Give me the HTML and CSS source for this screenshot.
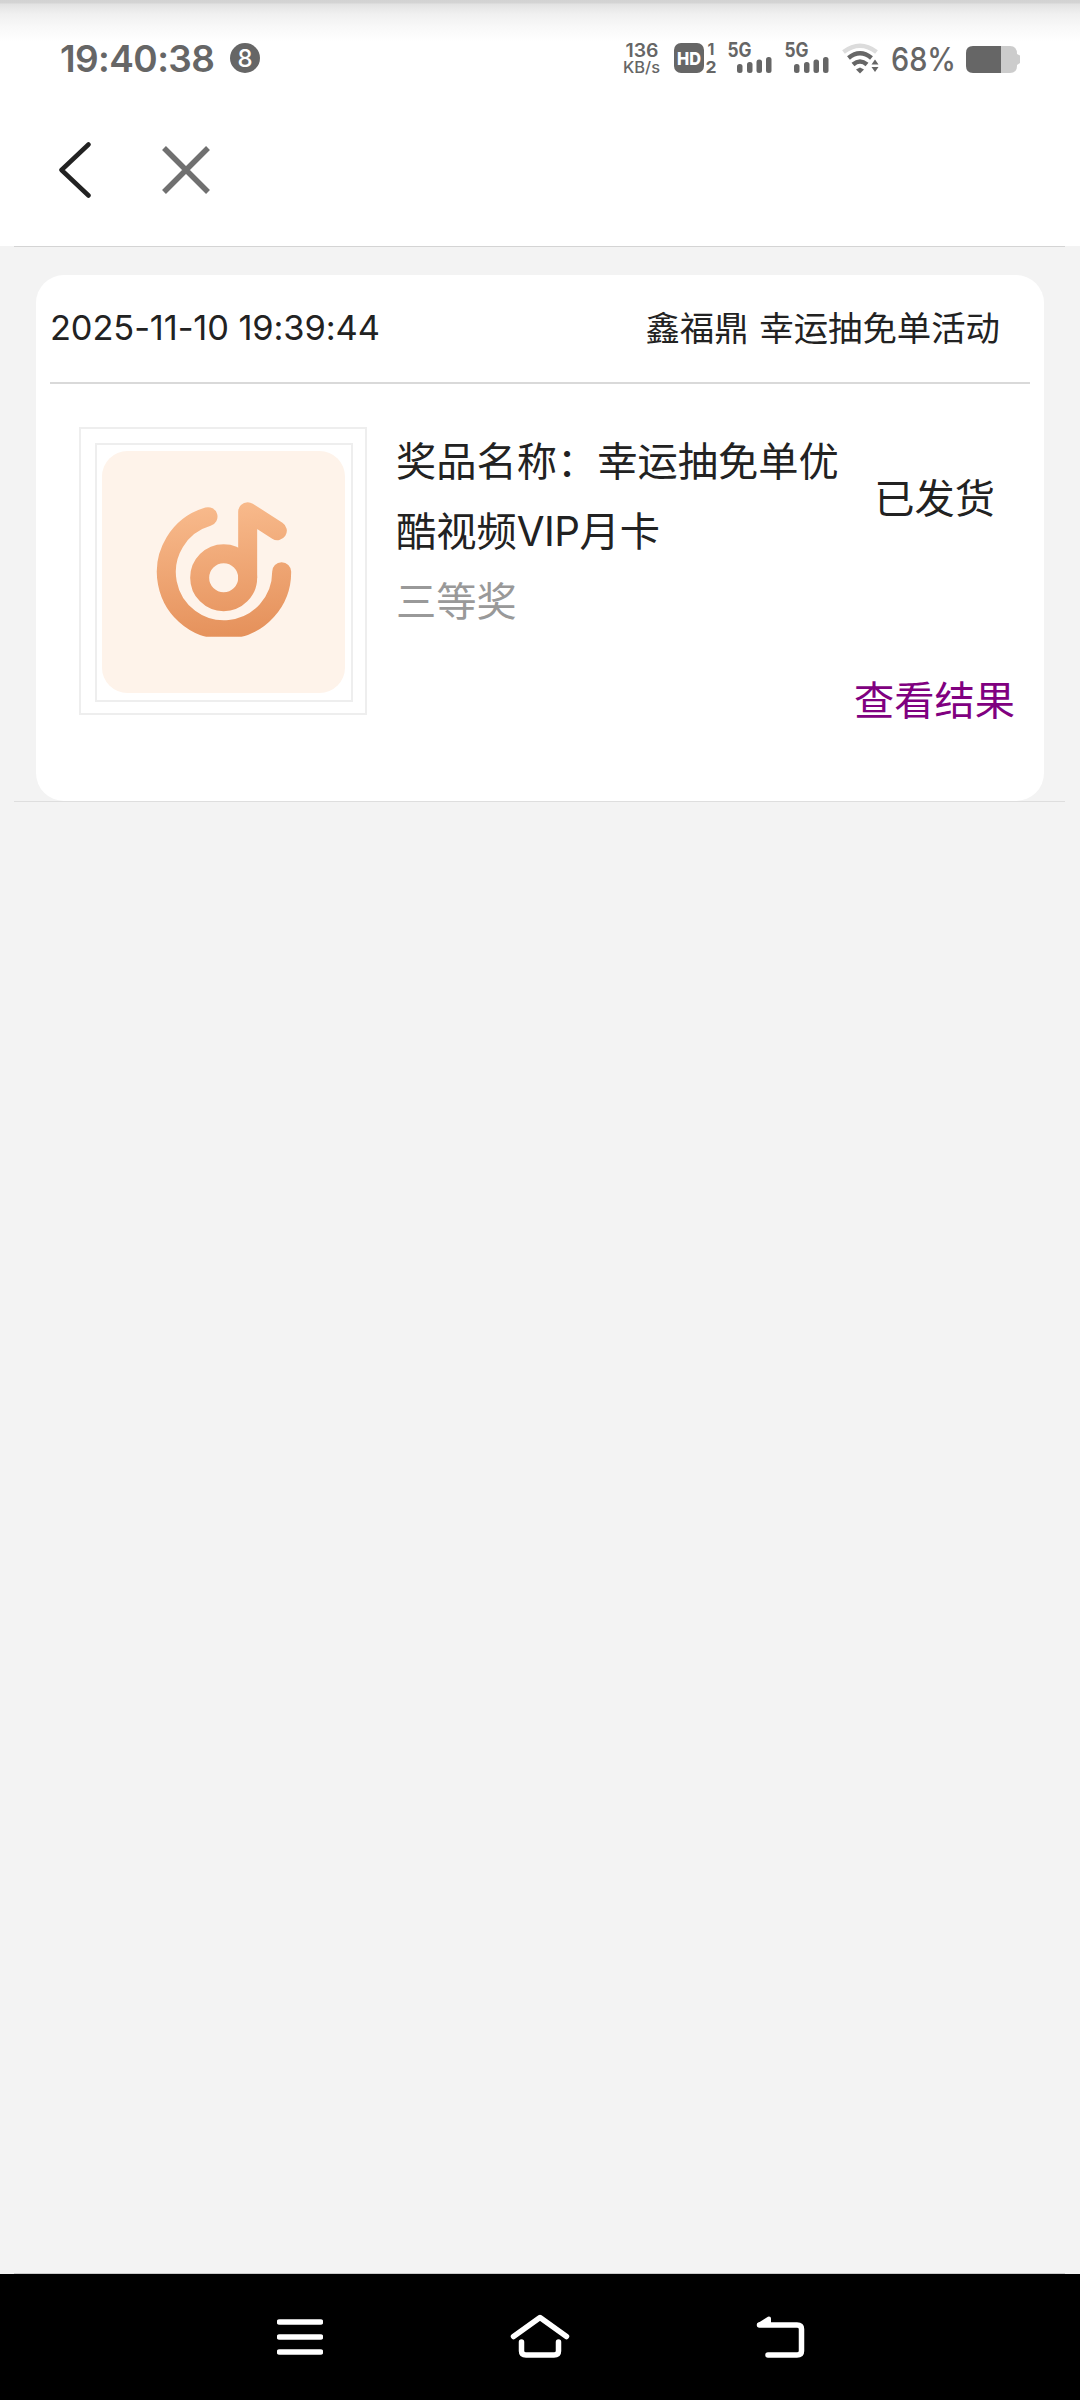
FILE: index.html
```html
<!DOCTYPE html>
<html lang="zh-CN">
<head>
<meta charset="utf-8">
<title>中奖记录</title>
<link rel="stylesheet" href="styles.css">
</head>
<body>
<header class="top">
  <div class="status">
    <span class="clock">19:40:38</span>
    <span class="badge">8</span>
    <svg class="indicators" width="400" height="40" viewBox="622 38 400 40">
      <g class="ink">
        <text class="net" x="625.500" y="57" textLength="33" lengthAdjust="spacingAndGlyphs">136</text>
        <text class="net unit" x="623" y="72.500" textLength="37" lengthAdjust="spacingAndGlyphs">KB/s</text>
        <rect x="674" y="43" width="30" height="30" rx="7"/>
        <text class="hd" x="677" y="65" textLength="24" lengthAdjust="spacingAndGlyphs">HD</text>
        <text class="sim" x="707.500" y="55">1</text>
        <text class="sim" x="705.500" y="72.500" textLength="11" lengthAdjust="spacingAndGlyphs">2</text>
        <text class="gen" x="727.500" y="57" textLength="24" lengthAdjust="spacingAndGlyphs">5G</text>
        <rect x="737" y="64" width="5.500" height="9" rx="2.500"/>
        <rect x="747" y="62" width="5.500" height="11" rx="2.500"/>
        <rect x="756.500" y="59.500" width="5.500" height="13.500" rx="2.500"/>
        <rect x="766" y="57" width="5.500" height="16" rx="2.500"/>
        <text class="gen" x="784.500" y="57" textLength="24" lengthAdjust="spacingAndGlyphs">5G</text>
        <rect x="794" y="64" width="5.500" height="9" rx="2.500"/>
        <rect x="804" y="62" width="5.500" height="11" rx="2.500"/>
        <rect x="813.500" y="59.500" width="5.500" height="13.500" rx="2.500"/>
        <rect x="823" y="57" width="5.500" height="16" rx="2.500"/>
        <path d="M856 69.500L860 67.500L864 69.500L860 73.500Z"/>
        <path d="M871.500 64.500L875 59.500L878.500 64.500ZM871.500 67L875 72L878.500 67Z"/>
        <text class="percent" x="891" y="70.500" textLength="65" lengthAdjust="spacingAndGlyphs">68%</text>
        <path d="M973 46H1001V73H973Q966 73 966 66V53Q966 46 973 46Z"/>
      </g>
      <path class="wave faint" d="M843.500 52Q860 39.500 876.500 52"/>
      <path class="wave" d="M848.500 58Q860 48.500 871.500 58"/>
      <path class="wave" d="M853 64.500Q860 58.500 867 64.500"/>
      <path class="spare" d="M1001 46H1010Q1017 46 1017 54L1020 55.500V63L1017 65V66Q1017 73 1010 73H1001Z"/>
    </svg>
  </div>
  <nav class="tools">
    <svg width="32" height="58" viewBox="0 0 32 58"><path class="back" d="M29.500 3.500L2.500 29L29.500 54.500"/></svg>
    <svg width="48" height="48" viewBox="0 0 48 48"><path class="close" d="M2 2L46 46M46 2L2 46"/></svg>
  </nav>
</header>
<main class="page">
  <article class="card">
    <div class="card-head">
      <time>2025-11-10 19:39:44</time>
      <span class="event">鑫福鼎 幸运抽免单活动</span>
    </div>
    <div class="card-body">
      <div class="frame"><div class="photo">
        <svg width="243" height="242" viewBox="125 121 729 726">
          <defs>
            <linearGradient id="warm" gradientUnits="userSpaceOnUse" x1="470" y1="280" x2="510" y2="680">
              <stop offset="0" stop-color="#f8ba8c"/><stop offset="1" stop-color="#e5915b"/>
            </linearGradient>
            <clipPath id="base"><rect x="125" y="121" width="729" height="557"/></clipPath>
          </defs>
          <rect x="125" y="121" width="729" height="726" rx="76" fill="#fef3ea"/>
          <g class="note" clip-path="url(#base)">
            <path d="M443 318A173 173 0 1 0 664 483"/>
            <circle cx="490" cy="501" r="72"/>
            <path d="M562 501V303L651 360"/>
          </g>
        </svg>
      </div></div>
      <div class="info">
        <p>奖品名称：幸运抽免单优</p>
        <p>酷视频<span class="latin">VIP</span>月卡</p>
        <p class="level">三等奖</p>
      </div>
      <div class="side">
        <span class="state">已发货</span>
        <a class="result">查看结果</a>
      </div>
    </div>
  </article>
</main>
<footer class="keys">
  <svg width="46" height="36" viewBox="277 2319 46 36"><path d="M279.500 2322H320.500M279.500 2337H320.500M279.500 2352H320.500"/></svg>
  <svg class="home" width="60" height="46" viewBox="510 2311 60 46"><path d="M513.500 2333.500L540 2314.500L566.500 2333.500M521.500 2339V2348Q521.500 2352 526 2352H554Q558.500 2352 558.500 2348V2339"/></svg>
  <svg width="50" height="46" viewBox="755 2311 50 46"><path class="solid" d="M769 2315.500L759.500 2321.500H769Z"/><path d="M759.500 2322H797Q801.500 2322 801.500 2326V2348Q801.500 2352 797 2352H768"/></svg>
</footer>
</body>
</html>
```
FILE: styles.css
```css
* { box-sizing: border-box; }
body {
  margin: 0;
  width: 1080px;
  height: 2400px;
  display: flex;
  flex-direction: column;
  background: #f3f3f3;
  color: #222;
  font-family: Inter, "Noto Sans CJK SC", sans-serif;
}
svg { display: block; flex: none; }
p { margin: 0; }

.top {
  height: 246px;
  background: linear-gradient(#d2d2d2 0, #d4d4d4 3px, #e2e2e2 4px, #f0f0f0 14px, #f8f8f8 26px, #fff 42px);
}
.status {
  height: 116px;
  padding: 0 58px 0 60px;
  display: flex;
  align-items: center;
  color: #666;
}
.clock {
  width: 170px;
  font-size: 37px;
  font-weight: 600;
  letter-spacing: -0.6px;
  white-space: nowrap;
}
.badge {
  width: 30px;
  height: 30px;
  border-radius: 50%;
  background: #666;
  color: #fff;
  font-size: 24px;
  font-weight: 500;
  line-height: 31px;
  text-align: center;
}
.indicators { margin-left: auto; }
.ink { fill: #666; }
.net { font-size: 18px; font-weight: 600; }
.unit { font-size: 15.500px; font-weight: 500; }
.hd { font-size: 18px; font-weight: 800; fill: #fff; }
.sim { font-size: 16px; font-weight: 700; }
.gen { font-size: 19.500px; font-weight: 700; }
.percent { font-size: 32px; font-weight: 500; }
.wave { fill: none; stroke: #666; stroke-width: 4.500px; }
.faint { stroke: #dcdcdc; }
.spare { fill: #ccc; }

.tools {
  height: 108px;
  padding: 0 0 0 59px;
  display: flex;
  align-items: center;
  gap: 71px;
}
.back { fill: none; stroke: #222; stroke-width: 4.500px; stroke-linecap: round; stroke-linejoin: round; }
.close { stroke: #707070; stroke-width: 5.500px; }

.page {
  flex: 1;
  margin: 0 15px 0 14px;
  padding-top: 28px;
  border-top: 1px solid #d4d4d4;
  border-bottom: 1px solid #ccc;
}
.card {
  height: 527px;
  padding: 0 14px;
  position: relative;
  border-bottom: 1px solid #dedede;
}
.card::before {
  content: "";
  position: absolute;
  z-index: -1;
  inset: 0 21px 0 22px;
  border-radius: 28px;
  background: #fff;
}
.card-head {
  height: 109px;
  margin: 0 21px 0 22px;
  padding: 0 30px 3px 0;
  display: flex;
  justify-content: space-between;
  align-items: center;
  border-bottom: 2px solid #d9d9d9;
  font-size: 34.400px;
  white-space: nowrap;
}
time { letter-spacing: -0.100px; }
.event { font-family: "Noto Sans CJK SC", sans-serif; word-spacing: 3px; padding-bottom: 3px; }
.card-body {
  padding: 43px 0 0 51px;
  display: flex;
}
.frame {
  flex: none;
  width: 288px;
  height: 288px;
  padding: 14px;
  border: 2px solid #eee;
}
.photo {
  width: 258px;
  height: 259px;
  padding: 6px 0 0 5px;
  border: 2px solid #eee;
}
.note { fill: none; stroke: url(#warm); stroke-width: 57px; stroke-linecap: round; stroke-linejoin: round; }
.info {
  flex: none;
  width: 480px;
  margin-top: -3px;
  padding-left: 29px;
  font-family: "Noto Sans CJK SC", sans-serif;
  font-size: 40.250px;
  line-height: 70px;
  white-space: nowrap;
}
.info p { height: 70px; }
.latin { font-family: Inter, sans-serif; letter-spacing: -0.500px; line-height: 1; }
.level { color: #999; }
.side {
  flex: none;
  width: 168px;
  display: flex;
  flex-direction: column;
  align-items: flex-end;
  padding-top: 34px;
  font-family: "Noto Sans CJK SC", sans-serif;
  font-size: 40.250px;
  line-height: 70px;
  white-space: nowrap;
}
.state { margin-right: 20px; }
.result { margin-top: 132px; color: #800080; }

.keys {
  height: 126px;
  padding: 0 275px 0 277px;
  display: flex;
  justify-content: space-between;
  align-items: center;
  background: #000;
}
.home { margin-left: 2px; }
.keys path { fill: none; stroke: #fff; stroke-width: 5.500px; stroke-linecap: round; stroke-linejoin: round; }
.keys .solid { fill: #fff; stroke-width: 4px; }
```
